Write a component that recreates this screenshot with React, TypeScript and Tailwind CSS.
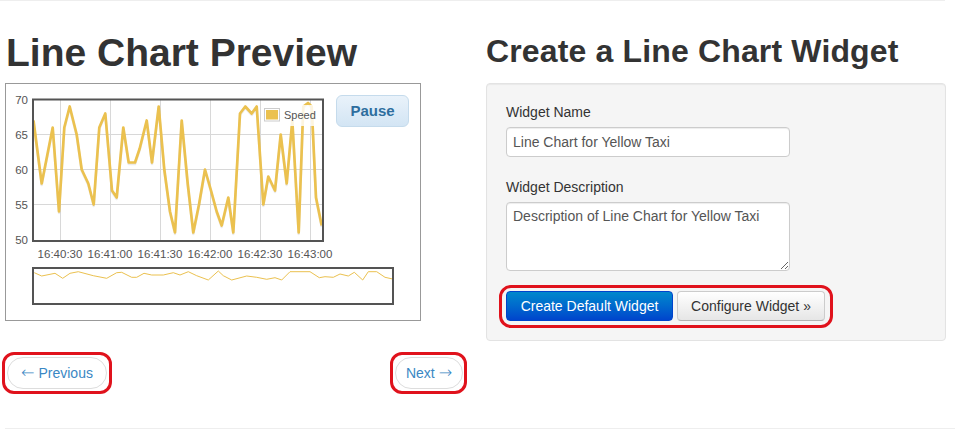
const speed: [number, number][] = [
  [33.5, 67], [41.7, 58], [52.7, 66], [59, 54], [64.3, 66], [69.7, 69], [76.7, 65], [81.7, 60],
  [88.3, 58], [93.7, 55], [99.3, 66], [105.3, 68], [112, 57], [116.7, 56], [123.3, 66], [128.7, 61],
  [135, 61], [139.7, 63], [146.7, 67], [152, 61], [158.7, 69], [164.3, 60], [170, 54], [175, 51],
  [181.7, 67], [187.7, 58], [193.3, 51], [199, 55], [205, 60], [211, 57], [216.7, 54], [221.7, 52],
  [228.3, 56], [233.3, 51], [240, 68], [245.3, 69], [251.7, 68], [256.7, 69], [263.3, 55], [268.3, 59],
  [275, 57], [280.7, 65], [286.7, 58], [292.3, 67], [298.7, 51], [303.3, 69], [308, 69.5], [311.7, 69],
  [316, 56], [321.7, 52],
];

const overview: [number, number][] = [
  [34.3, 272.7], [41.7, 276], [55, 273.3], [62.7, 278.3], [70, 273.3], [78.3, 271.7], [93.3, 275.7],
  [106.7, 278.3], [116.7, 272.7], [121.7, 272.3], [131.7, 277.3], [136.7, 277.3], [144, 273.3],
  [151.7, 275], [163.3, 275], [173.3, 272.7], [180, 275], [188.3, 271.7], [196.7, 275.7], [208.3, 280],
  [218.3, 271], [223.3, 275.7], [231.7, 280], [246.7, 276], [256.7, 277.3], [266.7, 279.3], [275, 277.7],
  [281.7, 280], [290, 271.7], [310, 271.7], [319.3, 277.7], [325, 276.7], [333.3, 277.3], [340, 274],
  [348.3, 276], [354.3, 272.3], [362.7, 280], [368.3, 271.7], [376.7, 271.7], [385, 277.3], [392.7, 279],
];

const valY = (v: number) => 99.5 + (70 - v) * 7;
const speedPts = speed.map(([x, v]) => `${x},${valY(v)}`).join(" ");
const overviewPts = overview.map(([x, y]) => `${x},${y}`).join(" ");

const xTicks = [
  { x: 60, label: "16:40:30" },
  { x: 110, label: "16:41:00" },
  { x: 160, label: "16:41:30" },
  { x: 210, label: "16:42:00" },
  { x: 260, label: "16:42:30" },
  { x: 310, label: "16:43:00" },
];
const yTicks = [70, 65, 60, 55, 50];
const labelFont = "'Liberation Sans', Arial, sans-serif";

function MainChart() {
  return (
    <svg width="330" height="178" viewBox="6 84 330 178" className="block shrink-0">
      {xTicks.map((t) => (
        <line key={t.x} x1={t.x + 0.5} x2={t.x + 0.5} y1="99" y2="241" stroke="#d8d8d8" strokeWidth="1" />
      ))}
      {yTicks.slice(1, 4).map((v) => (
        <line key={v} x1="33" x2="323" y1={valY(v)} y2={valY(v)} stroke="#d8d8d8" strokeWidth="1" />
      ))}
      <polyline points={speedPts} fill="none" stroke="rgba(0,0,0,0.08)" strokeWidth="2.5" strokeLinejoin="round" transform="translate(0,1.5)" />
      <polyline points={speedPts} fill="none" stroke="#ebc14f" strokeWidth="2.7" strokeLinejoin="round" />
      <rect x="262" y="105" width="57" height="21" fill="#fff" opacity="0.82" />
      <rect x="264.5" y="108.5" width="15" height="12.5" fill="#fff" stroke="#cccccc" strokeWidth="1" />
      <rect x="266" y="110" width="12" height="9.5" fill="#ebc14f" />
      <text x="284" y="119" fontSize="11" fill="#545454" fontFamily={labelFont}>
        Speed
      </text>
      <rect x="33" y="99.5" width="290" height="141.5" fill="none" stroke="#545454" strokeWidth="2" />
      {yTicks.map((v) => (
        <text key={v} x="28" y={valY(v) + 4} fontSize="11.5" fill="#545454" textAnchor="end" fontFamily={labelFont}>
          {v}
        </text>
      ))}
      {xTicks.map((t) => (
        <text key={t.label} x={t.x} y="257.5" fontSize="11.5" fill="#545454" textAnchor="middle" fontFamily={labelFont}>
          {t.label}
        </text>
      ))}
    </svg>
  );
}

function OverviewChart() {
  return (
    <svg width="414" height="58" viewBox="6 262 414 58" className="block">
      <polyline points={overviewPts} fill="none" stroke="#ebc14f" strokeWidth="1" strokeLinejoin="round" />
      <rect x="33" y="268" width="360" height="36" fill="none" stroke="#545454" strokeWidth="2" />
    </svg>
  );
}

function Ring({ children, className }: { children: React.ReactNode; className: string }) {
  return (
    <div className="relative inline-flex">
      {children}
      <div className={`pointer-events-none absolute border-[3px] border-[#e0121c] rounded-[12px] ${className}`} />
    </div>
  );
}

export default function App() {
  return (
    <div className="w-[955px] h-[432px] bg-white overflow-hidden font-['Liberation_Sans',Arial,sans-serif] text-[#333] text-[14px] leading-[20px]">
      <div className="border-t border-[#eeeeee] w-[945px]" />
      <div className="flex gap-5 pl-[5px] pt-[30px]">
        {/* Preview column */}
        <div className="w-[461px]">
          <h1 className="h-10 pl-px font-bold text-[39px] leading-[44px] text-[#333]">
            Line Chart Preview
          </h1>
          <div className="mt-3 w-[416px] h-[238px] border border-[#999]">
            <div className="flex items-start">
              <MainChart />
              <button className="ml-auto mt-[11px] mr-[11px] w-[74px] h-[32px] rounded-[6px] border border-[#c5dbec] bg-gradient-to-b from-[#e9f2fa] to-[#d3e5f4] font-bold text-[15px] text-[#2e6e9e]">
                Pause
              </button>
            </div>
            <OverviewChart />
          </div>
          <div className="flex justify-between mt-[36px] pl-[2px] pr-[3px]">
            <Ring className="-inset-x-[5px] -inset-y-[5px]">
              <a className="flex items-center justify-center w-[100px] h-[32px] rounded-full border border-[#ddd] bg-white text-[#3a87c4]">
                <span className="font-['DejaVu_Sans',sans-serif] font-light text-[16px] leading-[20px] mr-[4px]">←</span>Previous
              </a>
            </Ring>
            <Ring className="-left-[5px] -right-[4px] -inset-y-[5px]">
              <a className="flex items-center justify-center w-[68px] h-[32px] rounded-full border border-[#ddd] bg-white text-[#3a87c4]">
                Next<span className="font-['DejaVu_Sans',sans-serif] font-light text-[16px] leading-[20px] ml-[4px]">→</span>
              </a>
            </Ring>
          </div>
        </div>

        {/* Form column */}
        <div className="w-[460px]">
          <h2 className="h-10 font-bold text-[32px] leading-[40px] text-[#333] tracking-[0.15px]">
            Create a Line Chart Widget
          </h2>
          <div className="mt-3 h-[258px] rounded-[4px] border border-[#e3e3e3] bg-[#f5f5f5] px-[19px] pt-[18px] shadow-[inset_0_1px_1px_rgba(0,0,0,0.05)]">
            <label className="block mb-[5px]">Widget Name</label>
            <div className="w-[284px] h-[30px] rounded-[4px] border border-[#ccc] bg-white px-[6px] py-[4px] text-[#555] shadow-[inset_0_1px_1px_rgba(0,0,0,0.075)]">
              Line Chart for Yellow Taxi
            </div>
            <label className="block mt-5 mb-[5px]">Widget Description</label>
            <textarea
              readOnly
              value="Description of Line Chart for Yellow Taxi"
              className="block w-[284px] h-[69px] rounded-[4px] border border-[#ccc] bg-white px-[6px] py-[3px] text-[#555] shadow-[inset_0_1px_1px_rgba(0,0,0,0.075)] outline-none"
            />
            <div className="mt-5">
              <Ring className="-left-[7px] -right-[8px] -top-[6px] -bottom-[7px]">
                <div className="flex gap-1">
                  <button className="w-[167px] h-[30px] rounded-[4px] border border-[#0044cc] bg-gradient-to-b from-[#0088cc] to-[#0044cc] text-white">
                    Create Default Widget
                  </button>
                  <button className="w-[148px] h-[30px] rounded-[4px] border border-[#ccc] border-b-[#b3b3b3] bg-gradient-to-b from-white to-[#e6e6e6] text-[#333]">
                    Configure Widget »
                  </button>
                </div>
              </Ring>
            </div>
          </div>
        </div>
      </div>
      <div className="ml-[5px] mt-[39px] border-t border-[#eeeeee]" />
    </div>
  );
}
